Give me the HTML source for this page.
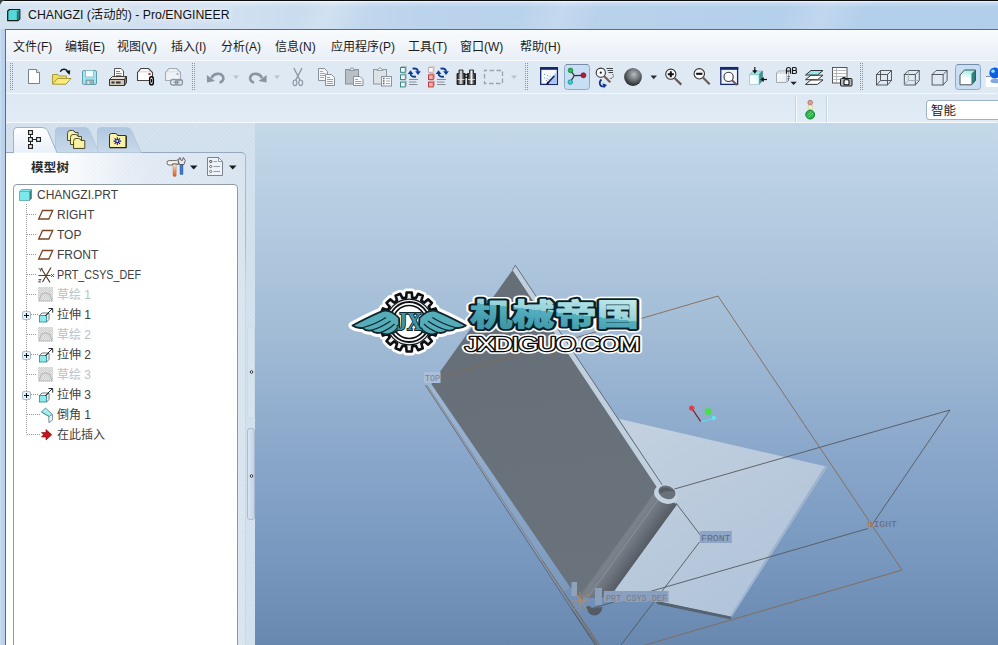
<!DOCTYPE html>
<html><head><meta charset="utf-8"><title>CHANGZI - Pro/ENGINEER</title>
<style>
*{margin:0;padding:0;box-sizing:border-box}
html,body{width:998px;height:645px;overflow:hidden;background:#bdd3ea;font-family:"Liberation Sans","Noto Sans CJK SC",sans-serif;font-size:12px;color:#1a1a1a}
#win{position:absolute;left:0;top:0;width:998px;height:645px;overflow:hidden}
#title{position:absolute;left:0;top:0;width:998px;height:30px;background:linear-gradient(#0b0b0b 0,#0b0b0b 1px,rgba(255,255,255,.9) 1px,rgba(255,255,255,.3) 2.5px,rgba(255,255,255,0) 7px),linear-gradient(115deg,transparent 30%,rgba(255,255,255,.2) 33%,transparent 37%,transparent 52%,rgba(255,255,255,.16) 56%,transparent 60%,transparent 78%,rgba(255,255,255,.16) 82%,transparent 86%),linear-gradient(90deg,#d3e2f1 0,#d0e0f0 24%,#bbd3ec 42%,#b2ceeb 100%)}
#frameL{position:absolute;left:0;top:29px;width:5px;height:616px;background:linear-gradient(90deg,#cfe0f2 0,#bdd4ee 1.5px,#b7d0ed 5px)}
#client{position:absolute;left:5px;top:29px;width:993px;height:616px;border-left:1px solid #5b6d81;border-top:1px solid #5b6d81;background:#dfe9f4}
#ttext{position:absolute;left:28px;top:7px;font-size:12.3px;line-height:16px;color:#111;white-space:nowrap;text-shadow:0 0 7px rgba(255,255,255,.95),0 0 12px rgba(255,255,255,.8),0 0 16px rgba(255,255,255,.6)}
#menubar{position:absolute;left:6px;top:30px;width:992px;height:30px;background:linear-gradient(#f9fbfd,#f1f5fa 50%,#e9eff7)}
.mi{position:absolute;top:40px;font-size:12px;line-height:15px;white-space:nowrap;color:#1b1b1b}
#tb1{position:absolute;left:6px;top:60px;width:991px;height:34px;background:#dfe9f4;border-top:1px solid #f7fafd;border-bottom:1px solid #f3f7fb}
#tb2{position:absolute;left:6px;top:94px;width:991px;height:29px;background:linear-gradient(#dde8f3,#e2ecf6);border-bottom:1px solid #f5f9fc}
#gfx{position:absolute;left:255px;top:123px;width:743px;height:522px;background:linear-gradient(#c4d8e9 0,#b3cae0 20%,#a2bcd6 40%,#8ca9cc 61%,#7797be 84%,#6888b0 100%)}
#nav{position:absolute;left:7px;top:123px;width:248px;height:522px;background:#d3e1ee}
svg{position:absolute;left:0;top:0;overflow:visible}
.t{position:absolute;white-space:nowrap;font-size:12px;line-height:15px}
</style></head><body>
<div id="win">
<div id="title"></div>
<div id="frameL"></div>
<div id="client"></div>
<svg width="30" height="30" viewBox="0 0 30 30"><path d="M0 0H5Q1.500 1 0 5Z" fill="#3a3f45"/><path d="M7.700 11L9.500 9.500H19.800V18.800L18 20.700H7.700Z" fill="#56d8d8" stroke="#0c1a1c" stroke-width="1.200" stroke-linejoin="round"/><path d="M17.300 11.300L19.300 9.800V18.600L17.300 20.300Z" fill="#2f7c7c"/><path d="M17.300 11V20.500" stroke="#184848" stroke-width=".6"/></svg>
<div id="ttext">CHANGZI (活动的) - Pro/ENGINEER</div>
<div id="menubar"></div>
<div class="mi" style="left:13px">文件(F)</div><div class="mi" style="left:65px">编辑(E)</div><div class="mi" style="left:117px">视图(V)</div><div class="mi" style="left:171px">插入(I)</div><div class="mi" style="left:221px">分析(A)</div><div class="mi" style="left:275px">信息(N)</div><div class="mi" style="left:331px">应用程序(P)</div><div class="mi" style="left:408px">工具(T)</div><div class="mi" style="left:460px">窗口(W)</div><div class="mi" style="left:520px">帮助(H)</div>
<div id="tb1"></div>
<div id="tb2"></div>
<div id="nav"></div>
<div id="gfx"></div>
<svg id="tbsvg" width="998" height="130" viewBox="0 0 998 130">
<defs>
<pattern id="grip" x="0" y="0" width="3" height="2" patternUnits="userSpaceOnUse"><rect x="0" y="0" width="1" height="1" fill="#6f87a6"/><rect x="2" y="0" width="1" height="1" fill="#6f87a6"/></pattern>
<radialGradient id="sph" cx="0.55" cy="0.36" r="0.68"><stop offset="0" stop-color="#c4c8cb"/><stop offset="0.12" stop-color="#a3a8ab"/><stop offset="0.45" stop-color="#73787c"/><stop offset="0.8" stop-color="#3a3e41"/><stop offset="1" stop-color="#1f2123"/></radialGradient>
<linearGradient id="cubeF" x1="0" y1="0" x2="0.3" y2="1"><stop offset="0" stop-color="#8fe6e6"/><stop offset="0.6" stop-color="#f2fdfd"/><stop offset="1" stop-color="#ffffff"/></linearGradient>
<linearGradient id="binoc" x1="0" y1="0" x2="1" y2="0"><stop offset="0" stop-color="#111"/><stop offset="0.25" stop-color="#666"/><stop offset="0.5" stop-color="#eef0f2"/><stop offset="0.75" stop-color="#555"/><stop offset="1" stop-color="#0c0c0c"/></linearGradient>
</defs>
<!-- grips -->
<path d="M10.5 63V91M12.5 63V91" stroke="#7e95b4" stroke-width="1" stroke-dasharray="1 1" fill="none"/>
<path d="M192.5 63V91M194.5 63V91" stroke="#7e95b4" stroke-width="1" stroke-dasharray="1 1" fill="none"/>
<path d="M525.5 63V91M527.5 63V91" stroke="#7e95b4" stroke-width="1" stroke-dasharray="1 1" fill="none"/>
<path d="M860.5 63V91M862.5 63V91" stroke="#7e95b4" stroke-width="1" stroke-dasharray="1 1" fill="none"/>
<!-- new -->
<path d="M28.5 69.5H36.5L39.5 72.5V83.5H28.5Z" fill="#fff" stroke="#7a828c"/>
<path d="M36.5 69.5V72.5H39.5" fill="#e9edf1" stroke="#7a828c"/>
<!-- open -->
<path d="M52.5 84V74.5H58L59.5 76H66.5V79" fill="#f1dc62" stroke="#a89a3a"/>
<path d="M52.5 84.2L57.5 78.5H71L66 84.2Z" fill="#f8ea7c" stroke="#a89a3a"/>
<path d="M60.3 71.8C61.5 68.6 66 68.2 68 71.5" fill="none" stroke="#111" stroke-width="1.4"/>
<path d="M65.8 71.2L70.3 70.2L69.6 75Z" fill="#111"/>
<!-- save -->
<rect x="82.5" y="70.5" width="14" height="14" rx="1.5" fill="#a3e6ee" stroke="#5b9fae"/>
<rect x="85.5" y="70.5" width="8" height="6.5" fill="#f6fbfd" stroke="#7fb6c2" stroke-width=".8"/>
<rect x="86" y="80" width="7.5" height="4.5" fill="#9ab0ba" stroke="#6c94a0" stroke-width=".8"/>
<rect x="87.3" y="81" width="2" height="3" fill="#c9e9ee"/>
<!-- print -->
<path d="M114.5 77.5V68.5H121L123.5 71V77.5Z" fill="#fff" stroke="#555"/>
<path d="M116 71.5H120M116 73.5H121.5M116 75.5H121.5" stroke="#777" stroke-width=".9"/>
<path d="M109.500 79.500L112.500 76.500H126.500L124.500 79.500Z" fill="#e6e1d4" stroke="#444"/>
<path d="M109.5 79.5H124.5V85.500H109.500Z" fill="#d0c9b8" stroke="#333"/>
<path d="M124.5 79.5L126.500 76.500V82.500L124.500 85.500Z" fill="#8a8578" stroke="#333"/>
<rect x="111.500" y="81.5" width="3" height="2" fill="#333"/><rect x="116" y="81.5" width="4.500" height="2" fill="#333"/>
<!-- mail attach -->
<path d="M137.500 80.500V72.500L141 68.500H148.500L152.500 72.500V80.500Z" fill="#fdfdfd" stroke="#444" stroke-width="1.1"/>
<path d="M139 71.800H150.500" stroke="#e8c8cc" stroke-width="1"/>
<rect x="148.500" y="73" width="2" height="2" fill="#c03040"/>
<rect x="149.700" y="76.700" width="3.600" height="8" rx="1.800" fill="#fff" stroke="#000" stroke-width="1.500"/>
<path d="M151.500 79V82.500" stroke="#000" stroke-width="1"/>
<!-- mail link (disabled) -->
<path d="M165.500 80.500V72.500L169 68.500H176.500L180.500 72.500V80.500Z" fill="#eef2f6" stroke="#a3abb4" stroke-width="1.1"/>
<path d="M167 71.800H178.500" stroke="#d8dde3" stroke-width="1"/>
<rect x="176.500" y="73" width="2" height="2" fill="#aab2ba"/>
<rect x="170.500" y="79.500" width="7" height="5.500" rx="2.600" fill="#e8edf2" stroke="#8d97a2" stroke-width="1.300"/>
<rect x="175.500" y="79.500" width="7" height="5.500" rx="2.600" fill="none" stroke="#8d97a2" stroke-width="1.300"/>
<path d="M173.500 82.300H179.500" stroke="#8d97a2" stroke-width="1.400"/>
<!-- undo -->
<path d="M211.500 78C213.500 73.500 220.500 72 223 76.500C224.300 79.500 222 82 219.500 82.500" fill="none" stroke="#8a95a2" stroke-width="2.600"/>
<path d="M206.800 75L207 82.500L215 81Z" fill="#8a95a2"/>
<path d="M233 75.500H239L236 79Z" fill="#b7c2ce"/>
<!-- redo -->
<path d="M262 78C260 73.500 253 72 250.500 76.500C249.200 79.500 251.500 82 254 82.500" fill="none" stroke="#8a95a2" stroke-width="2.600"/>
<path d="M266.700 75L266.500 82.500L258.500 81Z" fill="#8a95a2"/>
<path d="M274 75.500H280L277 79Z" fill="#b7c2ce"/>
<!-- cut -->
<path d="M293.800 68L300 80.300M302 68L295.700 80.300" stroke="#8c98a5" stroke-width="1.400" fill="none"/>
<ellipse cx="295" cy="82.800" rx="1.900" ry="2.800" fill="none" stroke="#8c98a5" stroke-width="1.200"/>
<ellipse cx="300.700" cy="82.800" rx="1.900" ry="2.800" fill="none" stroke="#8c98a5" stroke-width="1.200"/>
<!-- copy -->
<path d="M318.500 68.500H324.500L327.500 71.500V80.500H318.500Z" fill="#f3f5f7" stroke="#8a939d"/>
<path d="M320 71.500H323M320 73.500H325.500M320 75.500H325.500M320 77.500H324" stroke="#9aa3ac" stroke-width=".9"/>
<path d="M325.500 74.500H331.500L334.500 77.500V85.500H325.500Z" fill="#f7f9fa" stroke="#868f99"/>
<path d="M327 77.500H330M327 79.500H333M327 81.500H333M327 83.500H333" stroke="#8f98a2" stroke-width=".9"/>
<!-- paste -->
<rect x="345.500" y="69.500" width="13" height="14.500" fill="#b9bfc6" stroke="#878f98"/>
<path d="M349 70.500L351 68H353L355 70.500Z" fill="#dfe3e7" stroke="#878f98" stroke-width=".9"/>
<path d="M353.500 76.500H360L363 79.500V85.500H353.500Z" fill="#f7f9fa" stroke="#868f99"/>
<path d="M355 79.500H358M355 81.500H361.500M355 83.500H361.500" stroke="#8f98a2" stroke-width=".9"/>
<!-- paste special -->
<rect x="373.500" y="69.500" width="13" height="14.500" fill="#dde2e7" stroke="#8f97a0"/>
<path d="M377 70.500L379 68H381L383 70.500Z" fill="#eef1f4" stroke="#8f97a0" stroke-width=".9"/>
<rect x="381.500" y="76.500" width="10" height="9.500" fill="#f7f9fa" stroke="#8a939d"/>
<path d="M383 78.500H384.500M383 81H384.500M383 83.500H384.500" stroke="#59626c" stroke-width="1.300"/>
<path d="M386 78.500H390M386 81H390M386 83.500H390" stroke="#9aa3ac" stroke-width=".9"/>
</svg>
<svg id="tbsvg2" width="998" height="130" viewBox="0 0 998 130">
<defs><linearGradient id="cubeW" x1="1" y1="0" x2="0" y2="1"><stop offset="0" stop-color="#c9f3f3"/><stop offset="0.5" stop-color="#f4fdfd"/><stop offset="1" stop-color="#ffffff"/></linearGradient><linearGradient id="shF" x1="0.6" y1="0" x2="0.35" y2="1"><stop offset="0" stop-color="#9deee6"/><stop offset="0.3" stop-color="#c9f6f2"/><stop offset="0.6" stop-color="#ffffff"/><stop offset="1" stop-color="#ffffff"/></linearGradient><linearGradient id="svw" x1="0" y1="0" x2="1" y2="1"><stop offset="0" stop-color="#ffffff"/><stop offset="1" stop-color="#e3e9ee"/></linearGradient></defs>
<!-- regen -->
<g id="regenA">
<path d="M412.500 68.600Q417.600 67.800 418 71.500" fill="none" stroke="#0c3c94" stroke-width="1.900"/>
<path d="M415.200 71.200H420.900L418 75Z" fill="#0c3c94"/>
<path d="M416 76.600Q411 77.400 410.500 73.700" fill="none" stroke="#0c3c94" stroke-width="1.900"/>
<path d="M407.700 74H413.400L410.500 70.200Z" fill="#0c3c94"/>
<path d="M409 79.500H418M409 82H416.500M409 84.500H417.500" stroke="#838e9a" stroke-width="1"/>
</g>
<g id="sq3"><rect x="400.500" y="67.500" width="4.800" height="4.800" fill="#f4f8f8" stroke="#3a8585" stroke-width="1"/><path d="M400.500 67.500L401.500 66.500H406.300V71.300L405.300 72.300" fill="none" stroke="#8fb5b5" stroke-width=".8"/></g>
<use href="#sq3" y="7.300"/><use href="#sq3" y="14.600"/>
<!-- regen manager -->
<use href="#regenA" x="28" y="0"/>
<rect x="428.500" y="67.500" width="4.800" height="4.800" fill="#fbf8f8" stroke="#c9a9a9" stroke-width="1"/><path d="M428.500 67.500L429.500 66.500H434.300V71.300L433.300 72.300" fill="none" stroke="#d8c4c4" stroke-width=".8"/>
<g id="sqr"><rect x="428.500" y="74.800" width="4.800" height="4.800" fill="#eeb4b4" stroke="#c03838" stroke-width="1"/><path d="M428.500 74.800L429.500 73.800H434.300V78.600L433.300 79.600" fill="none" stroke="#d88" stroke-width=".8"/></g>
<use href="#sqr" y="7.300"/>
<!-- binoculars -->
<path d="M459 70H463V73.500H465V84.500H457V73.500H459Z" fill="url(#binoc)" stroke="#111" stroke-width=".8"/>
<path d="M469.500 70H473.500V73.500H475.500V84.500H467.500V73.500H469.500Z" fill="url(#binoc)" stroke="#111" stroke-width=".8"/>
<path d="M457.400 79.500H464.600M467.900 79.500H475.100" stroke="#e8eaec" stroke-width=".8"/>
<rect x="464" y="73.800" width="4.500" height="4.200" fill="#1c1c1c"/>
<rect x="465.600" y="74.800" width="1.300" height="2.200" fill="#c8c8c8"/>
<!-- select dashed -->
<rect x="484.500" y="70.500" width="18" height="13" fill="none" stroke="#98a3ae" stroke-width="1.300" stroke-dasharray="4.500 2.500" stroke-dashoffset="2"/>
<path d="M511 75.500H517L514 79Z" fill="#b7c2ce"/>
<!-- repaint -->
<rect x="540.700" y="67.700" width="16.700" height="16.700" fill="#f6f9fe" stroke="#18266c" stroke-width="1.300"/>
<path d="M556.800 71.500V83.800H546Z" fill="#a9c6f2"/>
<rect x="540.100" y="67.100" width="17.900" height="2.700" fill="#18266c"/>
<path d="M554.300 76L547.800 83" stroke="#1a2550" stroke-width="1.500"/>
<path d="M548.500 82L547 84.200" stroke="#111a3c" stroke-width="2"/>
<path d="M544 74.500h1M547 75.500h1M549.500 76.500h1M544 78h1M546.500 78.500h1M548.500 79.500h1M546 80.500h1" stroke="#8799c0" stroke-width="1"/>
<!-- spin center (active) -->
<rect x="564.500" y="64.500" width="25" height="25" rx="3" fill="#c8def4" stroke="#8faac8"/>
<path d="M566 64.500H588" stroke="#758da8" stroke-width="1"/>
<path d="M570.500 70.400L574.300 75.600L570.300 82.100M574.300 75.600L583.400 75.300" fill="none" stroke="#30343a" stroke-width="1.200"/>
<circle cx="570.500" cy="70.400" r="2.300" fill="#2cb552" stroke="#0c7a2c" stroke-width=".7"/>
<circle cx="570.300" cy="82.100" r="2.300" fill="#35cfd0" stroke="#0e8a8a" stroke-width=".7"/>
<circle cx="583.400" cy="75.300" r="2.500" fill="#b81c3c" stroke="#7a0c22" stroke-width=".7"/>
<!-- orient mode -->
<circle cx="600.800" cy="72.700" r="4.600" fill="#f7fafc" stroke="#333" stroke-width="1.100"/>
<circle cx="600.800" cy="72.700" r="1.100" fill="#222"/>
<path d="M604.200 76.200L610.300 82.300" stroke="#7c5a48" stroke-width="2.100"/>
<path d="M606.500 68.500H613M607.500 70.500H613M608.500 72.500H613" stroke="#333" stroke-width=".9"/>
<path d="M612.500 74C614.500 76.500 612.500 79 609.500 78.500" fill="none" stroke="#333" stroke-width=".9" stroke-dasharray="1.500 1"/>
<path d="M601.500 79.500C598.500 82 599.500 86.500 603.500 86.500" fill="none" stroke="#12318c" stroke-width="1.700"/>
<path d="M602.500 83.200L607 85L603.800 88.300Z" fill="#12318c"/>
<!-- sphere -->
<circle cx="633" cy="77" r="8.900" fill="url(#sph)"/>
<path d="M650.500 75.500H657L653.700 79.300Z" fill="#2a2e33"/>
<!-- zoom in -->
<circle cx="670.800" cy="74.200" r="5.100" fill="#fbfcfd" stroke="#333" stroke-width="1.100"/>
<path d="M667.800 74.200H673.800M670.800 71.200V77.200" stroke="#111" stroke-width="2"/>
<path d="M674.700 78.200L681.300 84.600" stroke="#6a5a56" stroke-width="2.200"/>
<!-- zoom out -->
<circle cx="699.300" cy="73.800" r="5.200" fill="#fbfcfd" stroke="#333" stroke-width="1.100"/>
<path d="M696.200 73.800H702.400" stroke="#111" stroke-width="2.100"/>
<path d="M703.200 77.800L709.700 84.200" stroke="#6a5a56" stroke-width="2.200"/>
<!-- refit -->
<rect x="720.800" y="67.600" width="16.800" height="16.800" fill="#edf4fc" stroke="#18266c" stroke-width="1.300"/>
<rect x="720.200" y="67" width="18" height="2.800" fill="#18266c"/>
<circle cx="728.600" cy="76.900" r="4.600" fill="#fff" stroke="#333" stroke-width="1.100"/>
<path d="M732 80.300L737 85" stroke="#6a5a56" stroke-width="2"/>
<!-- reorient -->
<path d="M749.500 74.700L753 71H762.500L759 74.700Z" fill="#9be8e8" stroke="#6fb4b8" stroke-width=".6"/>
<path d="M759 74.700L762.500 71V80.500L759 84.500Z" fill="#3a9696" stroke="#2f7a7a" stroke-width=".6"/>
<rect x="749.500" y="74.700" width="9.500" height="9.800" fill="url(#cubeW)" stroke="#9cc4c8" stroke-width=".7"/>
<path d="M754.800 67V72" stroke="#111" stroke-width="1.200"/><path d="M752.300 70.300H757.300L754.800 73.800Z" fill="#111"/>
<path d="M767 79.500H762.500" stroke="#111" stroke-width="1.200"/><path d="M763.800 77V82L760.300 79.500Z" fill="#111"/>
<!-- saved views -->
<path d="M776.500 73L778.500 71H788.500V80.500L786.500 82.500H776.500Z" fill="url(#svw)" stroke="#98a2ac" stroke-width=".9"/>
<path d="M786.500 73V82.500M776.500 73H786.500L788.500 71" fill="none" stroke="#aab3bc" stroke-width=".7"/>
<path d="M787.500 76.500H790M787.500 78.500H789.500M787.500 80H789" stroke="#445" stroke-width=".8"/>
<path d="M786.500 73.700V69.500Q786.500 67.500 788.500 67.500Q790.500 67.500 790.500 69.500V73.700M786.500 71H790.500" fill="none" stroke="#15171a" stroke-width="1.150"/>
<path d="M792.500 67.500V73.500H795Q796.600 73.500 796.600 72Q796.600 70.500 795 70.500H792.500M795 70.500Q796.300 70.500 796.300 69Q796.300 67.500 795 67.500H792.500" fill="none" stroke="#15171a" stroke-width="1.150"/>
<path d="M790.500 81.800H796.800L793.600 85Z" fill="#222"/>
<!-- layers -->
<path d="M805.500 84.400L811 79.900H823L817.500 84.400Z" fill="#fff" stroke="#2e3236" stroke-width="1"/>
<path d="M805.500 79.700L811 75.200H823L817.500 79.700Z" fill="#fff" stroke="#2e3236" stroke-width="1"/>
<path d="M805.500 75L811 70.500H823L817.500 75Z" fill="#96e8ea" stroke="#2e3236" stroke-width="1"/>
<!-- view manager -->
<rect x="832.500" y="67.500" width="14.500" height="15.500" fill="#fdfdfd" stroke="#555" stroke-width="1"/>
<path d="M836.500 67.500V83M832.500 70.500H847M832.500 73.500H847M832.500 76.500H847M832.500 79.500H842" stroke="#a4aab0" stroke-width=".8"/>
<rect x="840.500" y="78.500" width="11.500" height="7.500" rx=".8" fill="#b4b8bc" stroke="#1c1e20" stroke-width="1"/>
<rect x="842.500" y="77" width="3" height="1.800" fill="#2a2c2e"/>
<rect x="844" y="79.800" width="5" height="5" rx="1" fill="#f4f6f8" stroke="#111" stroke-width="1.100"/>
<!-- wireframe cube -->
<g id="wcube" fill="none" stroke="#474c52" stroke-width=".9">
<rect x="876.500" y="74.500" width="11" height="10.500"/>
<path d="M876.500 74.500L880.500 70.500H891.500L887.500 74.500M891.500 70.500V80.500L887.500 85"/>
</g>
<path d="M880.500 70.500V80.500H891.500M880.500 80.500L876.500 85" fill="none" stroke="#474c52" stroke-width=".9"/>
<!-- hidden line -->
<use href="#wcube" x="27.800"/>
<path d="M908.300 70.500V80.500H919.300M908.300 80.500L904.300 85" fill="none" stroke="#a8aeb5" stroke-width="1"/>
<!-- no hidden -->
<use href="#wcube" x="55.600"/>
<!-- shaded (active) -->
<rect x="955.500" y="64.500" width="25" height="25" rx="3" fill="#c8def4" stroke="#8faac8"/>
<path d="M957 64.500H979" stroke="#758da8" stroke-width="1"/>
<path d="M960 84.800V75L964.500 70H975.500L971.500 73.500V84.800Z" fill="url(#shF)"/>
<path d="M971.500 73.500L975.500 70V80.500L971.500 84.800Z" fill="#2f8078"/>
<path d="M960 84.800V75L964.500 70H975.500V80.500L971.500 84.800Z" fill="none" stroke="#4a5056" stroke-width="1" stroke-linejoin="round"/>
<!-- partial -->
<rect x="985.800" y="77" width="14" height="10" fill="#fbfdfe"/>
<path d="M986 76.500H990" stroke="#667" stroke-width=".8"/>
<ellipse cx="995.500" cy="81" rx="5" ry="2.200" fill="#86a6dc"/>
<circle cx="994.800" cy="73" r="5.500" fill="#0e5fe0"/>
<circle cx="993" cy="71.200" r="1.800" fill="#8fe0ff"/>
</svg>
<style>
#navhatch{position:absolute;left:6px;top:124px;width:249px;height:521px;background:repeating-linear-gradient(135deg,#d6e3ef 0,#d6e3ef 1.5px,#d0dfec 1.5px,#d0dfec 3px)}
#panel{position:absolute;left:6px;top:152px;width:240px;height:500px;border:1px solid #94a8bf;border-left:none;border-right-color:#a6b9cd;border-top-right-radius:5px;background:linear-gradient(90deg,#fff 0,#fff 4%,rgba(255,255,255,0) 50%),repeating-linear-gradient(135deg,rgba(255,255,255,.0) 0,rgba(255,255,255,0) 1.5px,rgba(190,208,226,.13) 1.5px,rgba(190,208,226,.13) 3px),linear-gradient(90deg,#fdfeff 0,#f6f9fc 25%,#e4ecf5 60%,#dbe6f1 100%)}
#treebox{position:absolute;left:13px;top:184px;width:225px;height:470px;border:1px solid #8e9aa6;border-radius:4px;background:#fff}
.ti{position:absolute;left:57px;font-size:12px;line-height:14px;white-space:nowrap;color:#404040}
.ti.g{color:#b9bfc6}
#hdr{position:absolute;left:31px;top:161px;font-size:12.500px;font-weight:bold;line-height:15px;color:#2a2a2a;letter-spacing:.3px}
#combo{position:absolute;left:926px;top:100px;width:80px;height:20px;border:1px solid #9db0c6;border-radius:3px;background:#fff}
#combot{position:absolute;left:931px;top:103px;font-size:12.500px;line-height:16px;color:#222}
.hd{position:absolute;left:247px;width:8px;border:1px solid #a9bbcf;border-radius:3px}
</style>
<div id="navhatch"></div>
<div id="panel"></div>
<div id="treebox"></div>
<div style="position:absolute;left:245px;top:240px;width:1px;height:410px;background:linear-gradient(rgba(211,225,238,0) 0,rgba(211,225,238,.8) 50px,rgba(211,225,238,.8) 100%)"></div>
<div class="hd" style="top:326px;height:93px;border-color:#ccd9e7;background:rgba(220,232,243,.35)"></div>
<div class="hd" style="top:428px;height:92px;background:linear-gradient(90deg,#d9e5f1,#c3d3e5)"></div>
<div id="hdr">模型树</div>
<div id="combo"></div><div id="combot">智能</div>
<div class="ti" style="left:37px;top:188px">CHANGZI.PRT</div>
<div class="ti" style="top:208px">RIGHT</div>
<div class="ti" style="top:228px">TOP</div>
<div class="ti" style="top:248px">FRONT</div>
<div class="ti" style="top:268px;transform:scaleX(.895);transform-origin:0 0">PRT_CSYS_DEF</div>
<div class="ti g" style="top:288px">草绘 1</div>
<div class="ti" style="left:57px;top:308px">拉伸 1</div>
<div class="ti g" style="top:328px">草绘 2</div>
<div class="ti" style="left:57px;top:348px">拉伸 2</div>
<div class="ti g" style="top:368px">草绘 3</div>
<div class="ti" style="left:57px;top:388px">拉伸 3</div>
<div class="ti" style="left:57px;top:408px">倒角 1</div>
<div class="ti" style="left:57px;top:428px">在此插入</div>
<svg id="navsvg" width="998" height="645" viewBox="0 0 998 645">
<defs>
<linearGradient id="tabA" x1="0" y1="0" x2="0" y2="1"><stop offset="0" stop-color="#ffffff"/><stop offset="1" stop-color="#e9f0f8"/></linearGradient>
<linearGradient id="tabI" x1="0" y1="0" x2="0" y2="1"><stop offset="0" stop-color="#b0c6e0"/><stop offset="1" stop-color="#c8d9ea"/></linearGradient>
<linearGradient id="hamh" x1="0" y1="0" x2="0" y2="1"><stop offset="0" stop-color="#fff4ea"/><stop offset="0.45" stop-color="#f0a070"/><stop offset="1" stop-color="#e4581c"/></linearGradient>
<pattern id="skh" width="2" height="2" patternUnits="userSpaceOnUse"><rect width="2" height="2" fill="#e6e6e6"/><rect width="1" height="1" fill="#cfcfcf"/><rect x="1" y="1" width="1" height="1" fill="#cfcfcf"/></pattern>
</defs>
<!-- 2nd toolbar row separators -->
<path d="M795.500 96V122M826.500 96V122" stroke="#c5d3e2" stroke-width="1"/>
<path d="M796.500 96V122M827.500 96V122" stroke="#f6f9fc" stroke-width="1"/>
<!-- traffic light -->
<circle cx="810.200" cy="102.600" r="2.300" fill="#d9a09a" stroke="#b06a60" stroke-width=".8"/>
<rect x="808.200" y="105.200" width="4" height="4" fill="#f7f3c0" stroke="#cfc98a" stroke-width=".6"/>
<circle cx="810.200" cy="114.600" r="4.400" fill="#2cb84e" stroke="#0d7f2c" stroke-width="1"/>
<path d="M807.500 115.500L811.500 111.500M808.500 117.500L813 113" stroke="#6fdb88" stroke-width=".8"/>
<!-- tabs -->
<path d="M97.500 152.500V131Q97.500 127.500 101 127.500H126Q130 127.500 131.500 130.500L141 152.500Z" fill="url(#tabI)" stroke="#b7c9dd" stroke-width="1"/>
<path d="M55.500 152.500V131Q55.500 127.500 59 127.500H84Q88 127.500 89.500 130.500L99 152.500Z" fill="url(#tabI)" stroke="#b7c9dd" stroke-width="1"/>
<path d="M13.500 152.500V131Q13.500 127.500 17 127.500H42Q46 127.500 47.500 130.500L57 152.500Z" fill="url(#tabA)" stroke="#9fb2c8" stroke-width="1"/>
<path d="M14 152.500H56.500" stroke="#f0f5fa" stroke-width="1.200"/>
<!-- tab1 icon -->
<g fill="#fff" stroke="#222" stroke-width="1.200"><path d="M30.500 134V146M33 139.500H37" fill="none" stroke-width="1"/><rect x="28.600" y="130.600" width="3.800" height="3.800"/><rect x="28.600" y="137.600" width="3.800" height="3.800"/><rect x="28.600" y="144.600" width="3.800" height="3.800"/><rect x="36.600" y="137.600" width="3.800" height="3.800"/></g>
<!-- tab2 icon: folders -->
<g stroke="#3e3c24" stroke-width=".9" fill="#f8f2a6" stroke-linejoin="round">
<path d="M67.500 140.500V133.500Q67.500 130.500 70 130.500H72.500Q74.500 130.500 75 132.500H78V140.500Z"/>
<path d="M70.500 144.500V137.500Q70.500 134.500 73 134.500H75.500Q77.500 134.500 78 136.500H81.500V144.500Z"/>
<path d="M73.500 148.500V141.500Q73.500 138.500 76 138.500H78.500Q80.500 138.500 81 140.500H84.800V148.500Z"/>
</g>
<path d="M74.500 141.500V147.500H84" fill="none" stroke="#f3e77a" stroke-width="1"/>
<!-- tab3 icon: folder star -->
<path d="M109.500 147.500V135.500Q109.500 133.500 111.500 133.500H115.500Q117 133.500 117.500 135.500H126V147.500Z" fill="#f8f2a6" stroke="#33311c" stroke-width="1" stroke-linejoin="round"/>
<path d="M110 147.800H126.300V136" fill="none" stroke="#1e1d10" stroke-width=".9"/>
<path d="M117.300 137.300V144.900M113.500 141.100H121.100M114.600 138.400L120 143.800M120 138.400L114.600 143.800" stroke="#12128c" stroke-width="1.100"/>
<circle cx="117.300" cy="141.100" r="1.100" fill="#f8f2a6"/>
<!-- header icons -->
<g>
<rect x="173" y="164" width="3.200" height="12.500" rx="1.200" fill="url(#hamh)" stroke="#9a6a50" stroke-width=".4"/>
<path d="M167 162.800Q166.800 160.600 169 160.600H176.500L178.300 159.300V164.500H176.800V163.800H172.500V165H169Q167 165 167 162.800Z" fill="#f6f3ec" stroke="#4a4a4a" stroke-width=".8"/>
<rect x="180" y="164" width="3" height="10.500" fill="#3f79c6" stroke="#2a4f88" stroke-width=".4"/>
<path d="M179.300 164.500L178.300 160.500L180 157.500L181 160.300L182.500 160.300L183.300 157.500L185.200 160.500L184 164.500Z" fill="#e6eaee" stroke="#4a4a4a" stroke-width=".8"/>
</g>
<path d="M190 165.500H197.500L193.700 169.500Z" fill="#1a1a1a"/>
<path d="M207.500 157.500H218.500L222.500 161.500V175.500H207.500Z" fill="#eef3f8" stroke="#7a848f"/>
<path d="M218.500 157.500V161.500H222.500Z" fill="#fdfeff" stroke="#7a848f" stroke-width=".8"/>
<circle cx="210.700" cy="161.500" r="1.100" fill="#fff" stroke="#223" stroke-width=".9"/><circle cx="210.700" cy="166.500" r="1.100" fill="#fff" stroke="#556" stroke-width=".8"/><circle cx="210.700" cy="171.500" r="1.100" fill="#fff" stroke="#556" stroke-width=".8"/>
<path d="M213.500 161.500H217M213.500 166.500H220M213.500 171.500H220" stroke="#8a94a0" stroke-width=".9"/>
<path d="M229 165.500H236.500L232.700 169.500Z" fill="#1a1a1a"/>
<!-- sash dots -->
<circle cx="251.500" cy="372" r="1.300" fill="#fff" stroke="#222" stroke-width=".9"/>
<circle cx="251.500" cy="476" r="1.300" fill="#fff" stroke="#222" stroke-width=".9"/>
<!-- tree dotted lines -->
<g stroke="#9a9a9a" stroke-width="1" stroke-dasharray="1 1" fill="none">
<path d="M26.500 204V434.500"/>
<path d="M27 214.500H37M27 234.500H37M27 254.500H37M27 274.500H37M27 294.500H37M31 314.500H38M27 334.500H37M31 354.500H38M27 374.500H37M31 394.500H38M27 414.500H40M27 434.500H40"/>
</g>
<!-- part icon -->
<path d="M19.500 191.500L21.500 189.500H31.500V198.500L29.500 200.500H19.500Z" fill="#7de8ec" stroke="#5aa0a8" stroke-width=".8"/>
<path d="M29.500 191.500L31.500 189.500V198.500L29.500 200.500Z" fill="#3f7f88"/>
<path d="M19.500 191.500H29.500V200.500" fill="none" stroke="#5aa0a8" stroke-width=".7"/>
<!-- datum plane icons -->
<g id="dtm"><path d="M38.700 219L42.500 210.500H52.700L48.800 219Z" fill="#fff" stroke="#7a4626" stroke-width="1.300"/></g>
<use href="#dtm" y="20"/><use href="#dtm" y="40"/>
<!-- csys -->
<g stroke="#5a3a28" stroke-width="1.200" fill="none">
<path d="M41 268L50 282.500M51 267.500L42.500 282M38.500 275.500H50.500"/>
</g>
<g stroke="#333" stroke-width=".8" fill="none">
<path d="M38.500 268L40.500 270L42.500 268M40.500 270V271.500M51 274L54 277M54 274L51 277M38.500 279.500H41L38.500 282H41"/>
</g>
<!-- sketch icons (grey) -->
<g id="sk"><rect x="38" y="287" width="15" height="15" fill="url(#skh)"/><path d="M39.500 300.500C40.500 291 49.500 290 52 300.500" fill="none" stroke="#b4b4b4" stroke-width="1.100"/><path d="M39 300.500H52.500" stroke="#c4c4c4" stroke-width=".8"/></g>
<use href="#sk" y="40"/><use href="#sk" y="80"/>
<!-- expanders -->
<g id="exp"><rect x="22.500" y="311.500" width="8" height="8" rx="1.500" fill="#e6f0f9" stroke="#a9bdd2" stroke-width="1"/><path d="M24 315.500H29M26.500 313V318" stroke="#111" stroke-width="1"/></g>
<use href="#exp" y="40"/><use href="#exp" y="80"/>
<!-- extrude icons -->
<g id="ext"><rect x="39.500" y="315.500" width="7" height="6.500" fill="#8feaee" stroke="#3d8f98" stroke-width=".9"/><path d="M39.500 315.500L42 313H49L46.500 315.500M49 313V319.500L46.500 322" fill="none" stroke="#50585f" stroke-width=".8"/><path d="M45 316L52.500 308.500M48.500 308.500H52.700V312.700" fill="none" stroke="#2a2f35" stroke-width="1"/></g>
<use href="#ext" y="40"/><use href="#ext" y="80"/>
<!-- chamfer -->
<path d="M41.500 412L45.500 408L52.500 414.500V420L49 422.500V416.500Z" fill="#a8eef0" stroke="#4a7f88" stroke-width=".8"/>
<path d="M41.500 412L49 416.500L52.500 414.500" fill="none" stroke="#4a7f88" stroke-width=".7"/>
<path d="M49 416.500V422.500L52.500 420V414.500Z" fill="#e9f1f2" stroke="#6a8890" stroke-width=".6"/>
<!-- insert arrow -->
<path d="M41.500 432.500H46V429.500L51.800 434.800L46 440V437H41.500L43.500 434.800Z" fill="#c4141c" stroke="#7a0c10" stroke-width=".6"/>
</svg>
<svg id="gfxsvg" width="998" height="645" viewBox="0 0 998 645">
<defs>
<clipPath id="gclip"><rect x="255" y="123" width="743" height="522"/></clipPath>
<linearGradient id="lp" gradientUnits="userSpaceOnUse" x1="640" y1="430" x2="760" y2="620"><stop offset="0" stop-color="#c2d0df"/><stop offset="1" stop-color="#b0c3d9"/></linearGradient>
<linearGradient id="dp" gradientUnits="userSpaceOnUse" x1="520" y1="280" x2="560" y2="600"><stop offset="0" stop-color="#666e78"/><stop offset="1" stop-color="#6a727c"/></linearGradient>
<linearGradient id="cyl" gradientUnits="userSpaceOnUse" x1="618" y1="538" x2="646" y2="558"><stop offset="0" stop-color="#69717a"/><stop offset="0.15" stop-color="#7a838c"/><stop offset="0.35" stop-color="#727a83"/><stop offset="0.65" stop-color="#5f666f"/><stop offset="1" stop-color="#484f57"/></linearGradient>
<linearGradient id="gloss" gradientUnits="userSpaceOnUse" x1="551.700" y1="331.900" x2="556.300" y2="292.100"><stop offset="0" stop-color="#3f97a8"/><stop offset="0.5" stop-color="#55b0be"/><stop offset="0.5" stop-color="#93d2da"/><stop offset="1" stop-color="#bfe8ec"/></linearGradient>
</defs>
<g clip-path="url(#gclip)">
<!-- light plate -->
<path d="M618.800 418.800L827.300 466.700L731.700 616.700L660 602L614.500 590.600L676 504.500L664 487.500Z" fill="url(#lp)"/>
<path d="M827.300 466.700L731.700 616.700L729.800 616.200L824.800 466.200Z" fill="#9cb3cf"/>
<path d="M655 600.500L731.700 616.700L730.200 619.300L657.500 604.300Z" fill="#566270"/>
<!-- dark plate -->
<path d="M430 381L425.500 385.200L563 594L569.500 586Z" fill="#fff" fill-opacity=".07"/>
<path d="M512.600 269.900L656.800 487L664 494L582 600L569 585.500L431.300 384.100Z" fill="url(#dp)"/>
<path d="M512.600 269.900L515.300 265.200L664 487.500L656.800 487Z" fill="#c2d0dd"/>
<path d="M515.300 265.200L664 487.500" stroke="#4d5965" stroke-width=".8" fill="none"/>
<!-- plate left thin lines -->
<path d="M515.300 265.200L512.600 269.900M425.500 385.200L598.300 650" fill="none" stroke="#55606c" stroke-width=".8"/>
<path d="M426.800 385L564.300 593.500" fill="none" stroke="#8a7260" stroke-width=".7"/>
<!-- cylinder -->
<path d="M654 493L677 504.500L614.500 590.600L604 592L603 598L580 598L578.500 597Z" fill="url(#cyl)"/>
<path d="M660 497L583 604" stroke="#949da6" stroke-width=".7" fill="none"/>
<!-- little notches -->
<rect x="571.500" y="582" width="5.500" height="14" fill="#8ea2bb"/>
<rect x="595" y="588" width="7" height="17" fill="#8aa0bd"/>
<path d="M586 606.500Q587.500 615.500 595 615.500Q601 615 602.500 607L597 607.500Q592 609.500 589.500 606Z" fill="#535b64"/>
<!-- hinge top -->
<ellipse cx="665.800" cy="494.200" rx="12" ry="9.300" fill="#c6d4e1" transform="rotate(22 665.800 494.200)"/>
<ellipse cx="667" cy="492.300" rx="8.800" ry="6.500" fill="#69717b" transform="rotate(22 667 492.300)"/>
<path d="M659 489.500Q666 484.500 675.500 492Q667 489.500 660 493.500Z" fill="#555c65"/>
<!-- datum lines dark -->
<g fill="none" stroke="#55585c" stroke-width=".9">
<path d="M674.500 489L950 410L870.500 527"/>
<path d="M868 528.500L593 608"/>
<path d="M676 503L701 536"/>
<path d="M699.500 542L621 645"/>
<path d="M571.500 609L600 650"/>
</g>
<!-- datum lines brown -->
<g fill="none" stroke="#826a54" stroke-width=".9">
<path d="M440 377.500L718 296L902 570L628 650"/>
<path d="M564.300 593.500L601.500 650"/>
<path d="M542 560L600 646"/>
</g>
<!-- labels -->
<rect x="424" y="372" width="16.500" height="11" fill="#a9bfd9"/>
<text x="425" y="381" font-family="Liberation Mono,monospace" font-size="9" fill="#7a7f88" textLength="15" lengthAdjust="spacingAndGlyphs">TOP</text>
<rect x="699.800" y="531" width="32" height="12" fill="#8da6c8"/>
<text x="701" y="540.800" font-family="Liberation Mono,monospace" font-size="9.500" fill="#666a74" textLength="29.500" lengthAdjust="spacingAndGlyphs">FRONT</text>
<text x="867.500" y="527.300" font-family="Liberation Mono,monospace" font-size="9.500" fill="#666a78" textLength="29.500" lengthAdjust="spacingAndGlyphs"><tspan fill="#c07c48">R</tspan>IGHT</text>
<rect x="604" y="591" width="64.500" height="11" fill="#8ba0be"/>
<text x="606" y="600.500" font-family="Liberation Mono,monospace" font-size="9.500" fill="#7d7a7c" textLength="61" lengthAdjust="spacingAndGlyphs">PRT_CSYS_DEF</text>
<!-- csys orange scribble -->
<g fill="none" stroke="#c58a4a" stroke-width=".8"><path d="M573 606L589 594M576 594L588 611M572 601H590M580 592V612M574 610L586 598"/></g>
<!-- spin center -->
<path d="M691.700 408.100L700.800 421.700" stroke="#7a2434" stroke-width="1.200"/>
<path d="M700.800 421.700Q707 421 713.800 418" stroke="#58e0ea" stroke-width="1.300" fill="none"/>
<circle cx="691.700" cy="408.100" r="2.600" fill="#e8384a"/>
<circle cx="708.200" cy="411.400" r="3.500" fill="#4ade4e"/>
<circle cx="713.800" cy="417.900" r="2.100" fill="#5ce8f2"/>
<!-- LOGO -->
<g id="logo">
 <g stroke="#fff" stroke-width="8" stroke-linejoin="round" fill="#fff">
  <path d="M406.2 297.6L406.6 292.5L411.8 292.5L412.2 297.6L415.8 298.3L418.1 293.8L422.8 295.7L421.3 300.6L424.4 302.6L428.2 299.3L431.9 303.0L428.6 306.8L430.6 309.9L435.5 308.4L437.4 313.1L432.9 315.4L433.6 319.0L438.7 319.4L438.7 324.6L433.6 325.0L432.9 328.6L437.4 330.9L435.5 335.6L430.6 334.1L428.6 337.2L431.9 341.0L428.2 344.7L424.4 341.4L421.3 343.4L422.8 348.3L418.1 350.2L415.8 345.7L412.2 346.4L411.8 351.5L406.6 351.5L406.2 346.4L402.6 345.7L400.3 350.2L395.6 348.3L397.1 343.4L394.0 341.4L390.2 344.7L386.5 341.0L389.8 337.2L387.8 334.1L382.9 335.6L381.0 330.9L385.5 328.6L384.8 325.0L379.7 324.6L379.7 319.4L384.8 319.0L385.5 315.4L381.0 313.1L382.9 308.4L387.8 309.9L389.8 306.8L386.5 303.0L390.2 299.3L394.0 302.6L397.1 300.6L395.6 295.7L400.3 293.8L402.6 298.3Z"/>
  <path id="wingL" d="M399 318C393 311.500 387 310 383 310.800C372 315 362 320.500 352.500 325.500C356 328 359.500 328.300 362.500 327.800C365 330.500 368.500 331 371.500 330.300C374 333 378 333.300 381 332.500C384 334.800 388 334.500 391 333.300C394 333.500 397 331.500 399.500 328Z"/>
  <use href="#wingL" transform="translate(818.400 0) scale(-1 1)"/>
  <text x="470" y="325" font-family="Liberation Sans,Noto Sans CJK SC,sans-serif" font-weight="bold" font-size="30" textLength="169" lengthAdjust="spacingAndGlyphs">机械帝国</text>
 </g>
 <path d="M406.2 297.6L406.6 292.5L411.8 292.5L412.2 297.6L415.8 298.3L418.1 293.8L422.8 295.7L421.3 300.6L424.4 302.6L428.2 299.3L431.9 303.0L428.6 306.8L430.6 309.9L435.5 308.4L437.4 313.1L432.9 315.4L433.6 319.0L438.7 319.4L438.7 324.6L433.6 325.0L432.9 328.6L437.4 330.9L435.5 335.6L430.6 334.1L428.6 337.2L431.9 341.0L428.2 344.7L424.4 341.4L421.3 343.4L422.8 348.3L418.1 350.2L415.8 345.7L412.2 346.4L411.8 351.5L406.6 351.5L406.2 346.4L402.6 345.7L400.3 350.2L395.6 348.3L397.1 343.4L394.0 341.4L390.2 344.7L386.5 341.0L389.8 337.2L387.8 334.1L382.9 335.6L381.0 330.9L385.5 328.6L384.8 325.0L379.7 324.6L379.7 319.4L384.8 319.0L385.5 315.4L381.0 313.1L382.9 308.4L387.8 309.9L389.8 306.8L386.5 303.0L390.2 299.3L394.0 302.6L397.1 300.6L395.6 295.7L400.3 293.8L402.6 298.3Z" fill="#eef1f3" stroke="#0d0f12" stroke-width="2.600" stroke-linejoin="round"/>
 <circle cx="409.200" cy="322" r="22.800" fill="none" stroke="#0d0f12" stroke-width="1.200"/>
 <circle cx="409.200" cy="322" r="20" fill="#fff" stroke="#0d0f12" stroke-width="1.800"/>
 <circle cx="409.200" cy="322" r="16.500" fill="#fff" stroke="#0d0f12" stroke-width="1.600"/>
 <g fill="#55adb9" stroke="#10252c" stroke-width="1.800" stroke-linejoin="round">
  <use href="#wingL"/>
  <use href="#wingL" transform="translate(818.400 0) scale(-1 1)"/>
 </g>
 <g fill="none" stroke="#10252c" stroke-width="1.100">
  <path id="fe" d="M362.500 327.800C371 325.500 379 322 386 317.500M371.500 330.300C379 328 385 325 390.500 321M381 332.500C386 330.500 391 327.500 394.500 324M391 333.300C394 331.500 396.500 329.500 398 327"/>
  <use href="#fe" transform="translate(818.400 0) scale(-1 1)"/>
 </g>
 <text x="396.800" y="330" font-family="Liberation Serif,serif" font-weight="bold" font-size="24.500" fill="#3f95a3" stroke="#0e2a33" stroke-width="2" paint-order="stroke" textLength="25" lengthAdjust="spacingAndGlyphs">JX</text>
 <text x="470" y="325" font-family="Liberation Sans,Noto Sans CJK SC,sans-serif" font-weight="bold" font-size="30" textLength="169" lengthAdjust="spacingAndGlyphs" fill="#0a1f2a" stroke="#0a1f2a" stroke-width="5" stroke-linejoin="round">机械帝国</text>
 <text x="470" y="325" font-family="Liberation Sans,Noto Sans CJK SC,sans-serif" font-weight="bold" font-size="30" textLength="169" lengthAdjust="spacingAndGlyphs" fill="url(#gloss)" stroke="url(#gloss)" stroke-width="1.200" stroke-linejoin="round">机械帝国</text>
 <g font-family="Liberation Sans,sans-serif" font-size="19.800" transform="translate(465 350.500) scale(1.330 1)">
  <text x="0" y="0" fill="#fff" stroke="#fff" stroke-width="5.600" stroke-linejoin="round" textLength="132" lengthAdjust="spacing">JXDIGUO.COM</text>
  <text x="0" y="0" fill="#fff" stroke="#0b0b0b" stroke-width="2.600" stroke-linejoin="round" paint-order="stroke" textLength="132" lengthAdjust="spacing">JXDIGUO.COM</text>
 </g>
</g>
</g>
</svg>
</div>
</body></html>
